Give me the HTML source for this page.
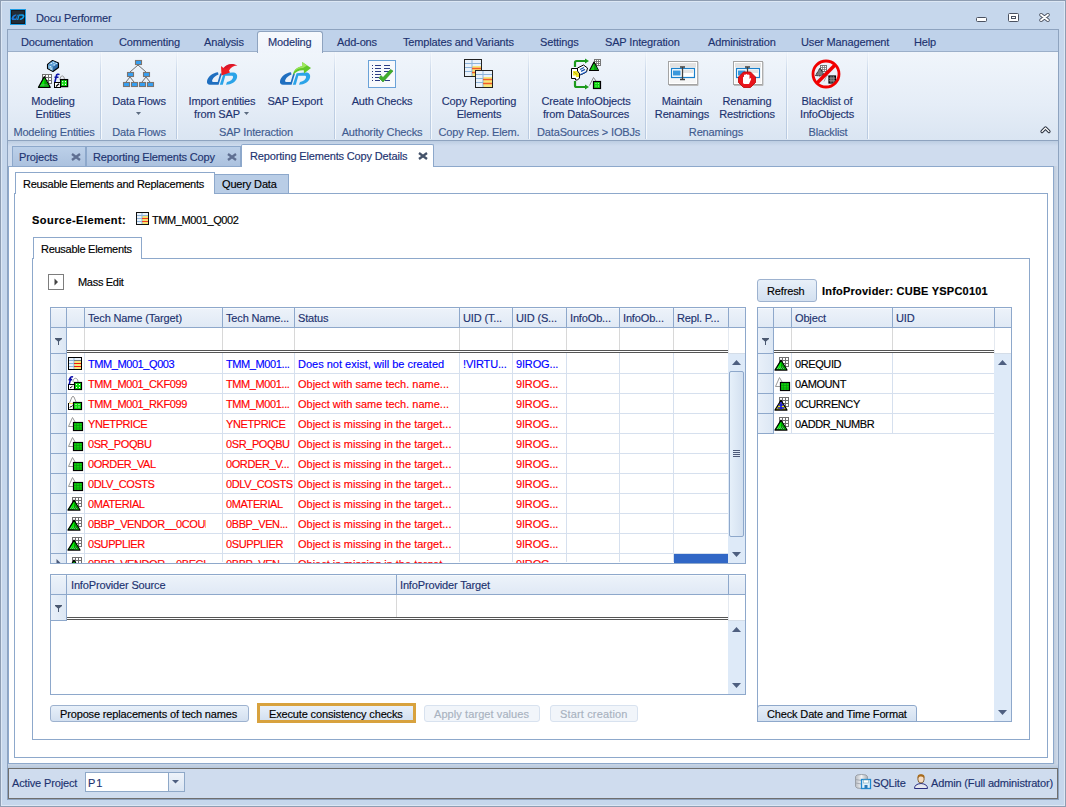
<!DOCTYPE html>
<html><head><meta charset="utf-8">
<style>
*{box-sizing:border-box;margin:0;padding:0}
html,body{width:1066px;height:807px;overflow:hidden}
body{position:relative;background:#c6d7ec;font-family:"Liberation Sans",sans-serif;font-size:11px;color:#1d3370;letter-spacing:-0.15px;-webkit-text-stroke:0.15px currentColor}
.a{position:absolute}
.t{position:absolute;white-space:nowrap;line-height:13px}
.c{text-align:center}
svg{position:absolute;overflow:visible}
.sep{position:absolute;top:52px;width:1px;height:87px;background:linear-gradient(#eef3fa,#c6d5e8 25%,#b9cae0);box-shadow:1px 0 0 #f4f8fc}
.gl{position:absolute;top:126px;white-space:nowrap;line-height:13px;color:#3f5b90;text-align:center}
.rt{position:absolute;top:36px;white-space:nowrap;line-height:13px}
.dt{position:absolute;top:146px;height:21px;background:linear-gradient(#bcd0e9,#abc1de);border:1px solid #8da8cb;border-bottom:none}
.x{position:absolute;font-weight:bold;font-size:12px;color:#6b7a90;line-height:13px}
</style></head><body>
<!-- window frame -->
<div class="a" style="left:0;top:0;width:1066px;height:807px;border:1px solid #8e9db2"></div>
<div class="a" style="left:1px;top:1px;width:1064px;height:805px;border:1px solid #dce7f4"></div>

<!-- title -->
<div class="a" style="left:10px;top:9px;width:16px;height:16px;background:#222c36;border:1px solid #1b9ae2;box-shadow:inset 0 0 0 1px #151a20"></div>
<svg style="left:8px;top:7px" width="20" height="20" viewBox="8 7 20 20"><g transform="translate(10.2,8.5) scale(0.43,0.46)">
 <path d="M14 12.3 C9 12.8,4 16.5,3 21 C2.6 23.5,4 24.8,6 24.8 L14.6 24.8 L18 13.5 L16.2 13.5 L13.7 22 L9.2 22 C8 22,7.8 21,8.4 19.8 C9.5 17.5,11.5 15.8,14.5 14.6Z" fill="#1f7ad8"/>
 <path d="M15.8 24.8 L19.6 13.2 L28 12.6 C32 12.4,33.8 14.5,33 17.8 C32 21.8,27.5 24.8,22 24.8 L23 22 C26.5 21.2,28.8 19.2,29 17.4 C29.2 16.2,28.5 15.8,27.5 15.8 L21.3 15.8 L18.8 24.8Z" fill="#12a2f0"/>
</g></svg>
<div class="t" style="left:36px;top:12px">Docu Performer</div>
<!-- window buttons -->
<div class="a" style="left:976px;top:17px;width:11px;height:5px;background:#fff;border:1px solid #4a5160;border-radius:1.5px"></div>
<div class="a" style="left:1008px;top:13px;width:11px;height:9px;background:#fff;border:1px solid #4a5160;border-radius:1.5px"></div>
<div class="a" style="left:1011px;top:16px;width:5px;height:3px;background:#fff;border:1px solid #4a5160"></div>
<svg style="left:1039px;top:13px" width="11" height="9" viewBox="0 0 11 9"><path d="M2 1.8 L9 7.2 M9 1.8 L2 7.2" stroke="#4a5160" stroke-width="3.6" stroke-linecap="round"/><path d="M2 1.8 L9 7.2 M9 1.8 L2 7.2" stroke="#fff" stroke-width="1.9" stroke-linecap="round"/></svg>

<!-- ribbon -->
<div class="a" style="left:7px;top:29px;width:1052px;height:771px;border:1px solid #8ea3bf"></div>
<div class="a" style="left:7px;top:29px;width:1052px;height:112px;border:1px solid #8ea3bf;background:#bfd2ea"></div>
<div class="a" style="left:8px;top:51px;width:1050px;height:1px;background:#9bafc9"></div>
<div class="a" style="left:8px;top:52px;width:1050px;height:88px;background:linear-gradient(#f0f5fb,#e5edf7 60%,#dae5f2)"></div>
<div class="a" style="left:257px;top:31px;width:66px;height:22px;border:1px solid #8ea3bf;border-bottom:none;border-radius:3px 3px 0 0;background:linear-gradient(#f6f9fd,#eff4fb)"></div>
<div class="rt" style="left:21px">Documentation</div>
<div class="rt" style="left:119px">Commenting</div>
<div class="rt" style="left:204px">Analysis</div>
<div class="rt" style="left:268px">Modeling</div>
<div class="rt" style="left:337px">Add-ons</div>
<div class="rt" style="left:403px">Templates and Variants</div>
<div class="rt" style="left:540px">Settings</div>
<div class="rt" style="left:605px">SAP Integration</div>
<div class="rt" style="left:708px">Administration</div>
<div class="rt" style="left:801px">User Management</div>
<div class="rt" style="left:914px">Help</div>

<div class="sep" style="left:100px"></div>
<div class="sep" style="left:176px"></div>
<div class="sep" style="left:334px"></div>
<div class="sep" style="left:430px"></div>
<div class="sep" style="left:528px"></div>
<div class="sep" style="left:645px"></div>
<div class="sep" style="left:786px"></div>
<div class="sep" style="left:867px"></div>

<div class="t c" style="left:3px;width:100px;top:95px">Modeling<br>Entities</div>
<div class="gl" style="left:4px;width:100px">Modeling Entities</div>
<div class="t c" style="left:89px;width:100px;top:95px">Data Flows</div>
<svg style="left:136px;top:112px" width="5" height="3"><path d="M0 0 H5 L2.5 3Z" fill="#5c6b80"/></svg>
<div class="gl" style="left:89px;width:100px">Data Flows</div>
<div class="t c" style="left:172px;width:100px;top:95px">Import entities</div>
<div class="t" style="left:194px;top:108px">from SAP</div>
<svg style="left:244px;top:112px" width="5" height="3"><path d="M0 0 H5 L2.5 3Z" fill="#5c6b80"/></svg>
<div class="t c" style="left:245px;width:100px;top:95px">SAP Export</div>
<div class="gl" style="left:206px;width:100px">SAP Interaction</div>
<div class="t c" style="left:332px;width:100px;top:95px">Auth Checks</div>
<div class="gl" style="left:332px;width:100px">Authority Checks</div>
<div class="t c" style="left:429px;width:100px;top:95px">Copy Reporting<br>Elements</div>
<div class="gl" style="left:429px;width:100px">Copy Rep. Elem.</div>
<div class="t c" style="left:536px;width:100px;top:95px">Create InfoObjects<br>from DataSources</div>
<div class="gl" style="left:537px;width:100px">DataSources &gt; IOBJs</div>
<div class="t c" style="left:632px;width:100px;top:95px">Maintain<br>Renamings</div>
<div class="t c" style="left:697px;width:100px;top:95px">Renaming<br>Restrictions</div>
<div class="gl" style="left:666px;width:100px">Renamings</div>
<div class="t c" style="left:777px;width:100px;top:95px">Blacklist of<br>InfoObjects</div>
<div class="gl" style="left:778px;width:100px">Blacklist</div>
<svg style="left:1040px;top:125px" width="11" height="9"><path d="M2 6.5 L5.5 3 L9 6.5" stroke="#2c3442" stroke-width="3.2" fill="none" stroke-linecap="round" stroke-linejoin="round"/><path d="M2 6.5 L5.5 3 L9 6.5" stroke="#fff" stroke-width="1.2" fill="none" stroke-linecap="round" stroke-linejoin="round"/></svg>
<!-- ribbon icons -->
<!-- modeling entities -->
<svg style="left:38px;top:60px" width="31" height="29" viewBox="0 0 31 29">
 <path d="M9.5 4.5 L14.5 0.5 L20.5 3 L20.5 7.5 L15 11.5 L9.5 8.5Z" fill="#2f6aa6" stroke="#000" stroke-width="1.1" stroke-linejoin="round"/>
 <path d="M10 4.6 L14.6 1.1 L20 3.2 L15 6.8Z" fill="#5e9fd6"/>
 <path d="M10.2 8.3 L14.8 11 V7 L10.2 4.8Z" fill="#7fb8dc"/>
 <g fill="#cfeafb"><rect x="12.5" y="2.8" width="1.6" height="1.2"/><rect x="15.5" y="4.3" width="1.6" height="1.2"/><rect x="14.8" y="1.8" width="1.6" height="1.1"/><rect x="17.6" y="3" width="1.5" height="1.1"/><rect x="11.8" y="6" width="1.4" height="1.3"/><rect x="12.5" y="8.3" width="1.4" height="1.3"/></g>
 <rect x="4.5" y="14.5" width="9" height="9" fill="#fff" stroke="#707070" stroke-width="1"/>
 <path d="M7.5 14.5 V23.5 M10.5 14.5 V23.5 M4.5 17.5 H13.5 M4.5 20.5 H13.5" stroke="#707070" stroke-width="1"/>
 <path d="M0.5 27.3 L6.3 16.8 L12.2 27.3Z" fill="#00ee00" stroke="#000" stroke-width="1.3" stroke-linejoin="round"/>
 <path d="M6.3 17.8 V26.6 H11.2Z" fill="#00a000"/>
 <path d="M2.5 25.8 H10.5 M3.5 24.5 H9.5" stroke="#8a9aa0" stroke-width="0.8" stroke-dasharray="1 1"/>
 <path d="M22 20 C22 14.5,26.5 14.5,26.5 20" stroke="#9a9a9a" stroke-width="1" fill="none"/>
 <path d="M18.2 16 C18.8 14.2,20.2 13.8,21.5 14.6 M16.5 17.3 H20.5 M18.6 15 L16.8 22.5" stroke="#0c14a8" stroke-width="1.6" fill="none"/>
 <rect x="16.5" y="22.5" width="6" height="5" fill="#fff" stroke="#000" stroke-width="1"/>
 <path d="M18 26.5 L21 23.8" stroke="#000" stroke-width="1.2"/>
 <rect x="22.6" y="19.6" width="7" height="7" fill="#11dd11" stroke="#000" stroke-width="1.3"/>
 <path d="M24.2 21.6 h1 M27 21.6 h1 M24.2 24.4 h1 M27 24.4 h1" stroke="#fff" stroke-width="1.1"/>
</svg>
<!-- data flows -->
<svg style="left:122px;top:59px" width="33" height="29" viewBox="0 0 33 29">
 <path d="M16 6 L8 13 M16 6 L24 13 M8 18 L4 23 M8 18 L12 23 M24 18 L20 23 M24 18 L28 23" stroke="#6e6e6e" stroke-width="1"/>
 <g fill="#34a0f5" stroke="#7a7470" stroke-width="1.1">
 <rect x="13.5" y="1.5" width="6" height="4"/>
 <rect x="5.5" y="13.5" width="6" height="4"/><rect x="21.5" y="13.5" width="6" height="4"/>
 <rect x="1.5" y="23.5" width="6" height="4"/><rect x="9.5" y="23.5" width="6" height="4"/><rect x="17.5" y="23.5" width="6" height="4"/><rect x="25.5" y="23.5" width="6" height="4"/>
 </g>
</svg>
<!-- import -->
<svg style="left:204px;top:60px" width="36" height="28" viewBox="0 0 36 28">
 <path d="M14 12.3 C9 12.8,4 16.5,3 21 C2.6 23.5,4 24.8,6 24.8 L14.6 24.8 L18 13.5 L16.2 13.5 L13.7 22 L9.2 22 C8 22,7.8 21,8.4 19.8 C9.5 17.5,11.5 15.8,14.5 14.6Z" fill="#1f6fc0"/>
 <path d="M15.8 24.8 L19.6 13.2 L28 12.6 C32 12.4,33.8 14.5,33 17.8 C32 21.8,27.5 24.8,22 24.8 L23 22 C26.5 21.2,28.8 19.2,29 17.4 C29.2 16.2,28.5 15.8,27.5 15.8 L21.3 15.8 L18.8 24.8Z" fill="#2aa3e8"/>
 <path d="M17.5 15.5 L17 6 L19.5 8 C23 4,28 2.5,33.5 5.5 C30 5.5,27 7,25 10.5 L26 12.5Z" fill="#ee1c24"/>
 <path d="M19.5 8 C23 4,28 2.5,33.5 5.5 C30 4.8,26 5.5,23 8.5Z" fill="#c8102e" opacity="0.6"/>
</svg>
<!-- export -->
<svg style="left:277px;top:60px" width="36" height="28" viewBox="0 0 36 28">
 <path d="M14 12.3 C9 12.8,4 16.5,3 21 C2.6 23.5,4 24.8,6 24.8 L14.6 24.8 L18 13.5 L16.2 13.5 L13.7 22 L9.2 22 C8 22,7.8 21,8.4 19.8 C9.5 17.5,11.5 15.8,14.5 14.6Z" fill="#1f6fc0"/>
 <path d="M15.8 24.8 L19.6 13.2 L28 12.6 C32 12.4,33.8 14.5,33 17.8 C32 21.8,27.5 24.8,22 24.8 L23 22 C26.5 21.2,28.8 19.2,29 17.4 C29.2 16.2,28.5 15.8,27.5 15.8 L21.3 15.8 L18.8 24.8Z" fill="#2aa3e8"/>
 <path d="M16 15 C16.5 10,20 7,25.5 6.3 L25.2 2 L34 8 L27 13.5 L26.8 10.3 C22 10,19 11.5,16 15Z" fill="#62c82a"/>
 <path d="M17 12 C18.5 9,21 7.2,25.5 6.3 L25.2 2 L30 5.5 L26 8 C22 8,19.5 9.5,17 12Z" fill="#9ee85a"/>
</svg>
<!-- auth checks -->
<svg style="left:368px;top:60px" width="28" height="28" viewBox="0 0 28 28">
 <rect x="0.5" y="0.5" width="27" height="27" fill="#f7f9fc" stroke="#6aa2d8" stroke-width="1"/>
 <g fill="#24357a"><rect x="4" y="5" width="1" height="1"/><rect x="4" y="8" width="1" height="1"/><rect x="4" y="11" width="1" height="1"/><rect x="4" y="14" width="1" height="1"/><rect x="4" y="17" width="1" height="1"/><rect x="4" y="20" width="1" height="1"/></g>
 <g stroke="#2c3d85" stroke-width="1"><path d="M7 5.5 H13 M16 5.5 H22 M7 8.5 H13 M16 8.5 H22 M7 11.5 H13 M16 11.5 H22 M7 14.5 H13 M7 17.5 H11 M7 20.5 H12 M17 20.5 H22"/></g>
 <path d="M11 18 L15 22 L25 11 L22.5 9.5 L15 17.5 L13 15.5Z" fill="#3fae2a" stroke="#2a8a1c" stroke-width="0.6"/>
</svg>
<!-- copy reporting elements -->
<svg style="left:464px;top:59px" width="29" height="29" viewBox="0 0 29 29">
 <rect x="0.5" y="0.5" width="17" height="17" fill="#eaf2fa" stroke="#222" stroke-width="1"/>
 <rect x="8" y="7" width="9" height="10" fill="#f8e678"/>
 <path d="M8 1 V17 M1 4.5 H17 M1 8.5 H8 M1 12.5 H8" stroke="#8db3da" stroke-width="1"/>
 <path d="M8 9.5 H17 M8 13.5 H17" stroke="#f05a28" stroke-width="1.3"/>
 <rect x="11.5" y="11.5" width="17" height="17" fill="#eaf2fa" stroke="#222" stroke-width="1"/>
 <rect x="19" y="18" width="9" height="10" fill="#f8e678"/>
 <path d="M19 12 V28 M12 15.5 H28 M12 19.5 H19 M12 23.5 H19" stroke="#8db3da" stroke-width="1"/>
 <path d="M19 20.5 H28 M19 24.5 H28" stroke="#f05a28" stroke-width="1.3"/>
</svg>
<!-- create infoobjects -->
<svg style="left:571px;top:59px" width="31" height="30" viewBox="0 0 31 30">
 <path d="M4 8 V3.5 Q4 2,5.5 2 H15" stroke="#1c9a1c" stroke-width="2.2" fill="none"/>
 <path d="M14 -0.5 L18 2 L14 4.5Z" fill="#1c9a1c"/>
 <path d="M4 22 V26.5 Q4 28,5.5 28 H15" stroke="#1c9a1c" stroke-width="2.2" fill="none"/>
 <path d="M14 25.5 L18 28 L14 30.5Z" fill="#1c9a1c"/>
 <path d="M0.5 9.5 H6 L8.5 13 L8.5 19 L6.5 21 H4.5 L4.5 19.5 L0.5 19.5Z" fill="#fff" stroke="#000" stroke-width="1"/>
 <path d="M2 12 H6 L8 15 V18 H5 V16.5 H2Z" fill="#f2e62a"/>
 <path d="M3 13 L6 15.5" stroke="#9a8a10" stroke-width="0.8"/>
 <path d="M6.5 9 L12.5 6 L16.5 9 L15.5 13 L9.5 16 L6.5 12Z" fill="#fff" stroke="#000" stroke-width="1"/>
 <path d="M9 10.5 L13 8.5 M10 12.3 L14 10.3" stroke="#1a55b0" stroke-width="1.3"/>
 <path d="M9.5 15.5 L15.5 12.5" stroke="#2a6ad0" stroke-width="1.2"/>
 <rect x="23.5" y="0.5" width="6" height="6" fill="#fff" stroke="#777" stroke-width="1"/>
 <path d="M25.5 0.5 V6.5 M27.5 0.5 V6.5 M23.5 2.5 H29.5 M23.5 4.5 H29.5" stroke="#777" stroke-width="0.9"/>
 <path d="M18.5 11.5 L23 3 L27.5 11.5Z" fill="#14d014" stroke="#000" stroke-width="1.1" stroke-linejoin="round"/>
 <path d="M23 4 V11 H27Z" fill="#0a9a1a"/>
 <path d="M18.5 26.5 L22.5 18.5 L25 22" stroke="#8a8a8a" stroke-width="1" fill="none"/>
 <rect x="22.5" y="22.5" width="7" height="7" fill="#11d611" stroke="#000" stroke-width="1.2"/>
 <path d="M24.5 24.5 h1 M27 24.5 h1 M24.5 27 h1 M27 27 h1" stroke="#9f9" stroke-width="1"/>
</svg>
<!-- maintain renamings -->
<svg style="left:668px;top:61px" width="31" height="25" viewBox="0 0 31 25">
 <rect x="0.5" y="0.5" width="29" height="23" fill="#fff" stroke="#a4a4a4" stroke-width="1"/>
 <rect x="2" y="2" width="26" height="4.5" fill="#e2e2e2"/>
 <rect x="2" y="17" width="26" height="5" fill="#f6f6f6"/>
 <rect x="3.5" y="7.5" width="23" height="9" fill="#fff" stroke="#1a80cc" stroke-width="1.2"/>
 <rect x="14" y="9" width="11" height="3" fill="#e4e4e4"/>
 <rect x="5" y="9.5" width="7.5" height="5" fill="#3a98dc"/>
 <path d="M12 6 H17 M14.5 6 V18.5 M12 18.5 H17" stroke="#404040" stroke-width="1.3"/>
 <path d="M1 24.5 H30 V1" stroke="#bbb" stroke-width="1" fill="none"/>
</svg>
<!-- renaming restrictions -->
<svg style="left:733px;top:61px" width="31" height="27" viewBox="0 0 31 27">
 <rect x="0.5" y="0.5" width="29" height="23" fill="#fff" stroke="#a4a4a4" stroke-width="1"/>
 <rect x="2" y="2" width="26" height="4.5" fill="#e2e2e2"/>
 <rect x="2" y="17" width="26" height="5" fill="#f6f6f6"/>
 <rect x="3.5" y="7.5" width="23" height="9" fill="#fff" stroke="#1a80cc" stroke-width="1.2"/>
 <rect x="14" y="9" width="11" height="3" fill="#e4e4e4"/>
 <rect x="5" y="9.5" width="7.5" height="5" fill="#3a98dc"/>
 <path d="M12 6 H17 M14.5 6 V11" stroke="#404040" stroke-width="1.3"/>
 <path d="M1 24.5 H30 V1" stroke="#bbb" stroke-width="1" fill="none"/>
 <path d="M10.5 11 L17.5 11 L22.5 16 L22.5 21.5 L17.5 26.5 L10.5 26.5 L5.5 21.5 L5.5 16Z" fill="#e8141c" stroke="#b00" stroke-width="0.8"/>
 <path d="M10 22 L10 16.5 Q10 15.5,11 16 L11 14 Q12 13,12.5 14 L12.5 13.5 Q13.5 12.5,14.5 13.5 L14.5 14 Q15.5 13,16.5 14 L16.5 18 L17.5 17 Q18.5 17,18 18.5 L16 23 L11 23Z" fill="#fff"/>
</svg>
<!-- blacklist -->
<svg style="left:811px;top:59px" width="30" height="30" viewBox="0 0 30 30">
 <rect x="9.5" y="6.5" width="6" height="6" fill="#fff" stroke="#777" stroke-width="1"/>
 <path d="M11.5 6.5 V12.5 M13.5 6.5 V12.5 M9.5 8.5 H15.5 M9.5 10.5 H15.5" stroke="#777" stroke-width="0.8"/>
 <path d="M4.5 16.5 L9 9 L13 15.5 L9 17Z" fill="#7a7a7a" stroke="#111" stroke-width="1" stroke-dasharray="1 0.6"/>
 <path d="M13 22.5 L16 16 L19 19" stroke="#aaa" stroke-width="1" fill="none"/>
 <rect x="18" y="17" width="6.5" height="7" fill="#555" stroke="#000" stroke-width="1.2"/>
 <path d="M20 17 V24 M22.3 17 V24 M18 19.3 H24.5 M18 21.6 H24.5" stroke="#999" stroke-width="0.6"/>
 <circle cx="15" cy="15" r="13" fill="none" stroke="#f10000" stroke-width="2.8"/>
 <path d="M24.5 5.5 L5.5 24.5" stroke="#f10000" stroke-width="3.6"/>
</svg>
<!-- doc tab strip -->
<div class="a" style="left:8px;top:141px;width:1050px;height:26px;background:linear-gradient(#bccde2,#cfdcee 5px,#cfdcee)"></div>
<div class="dt" style="left:12px;width:74px"></div>
<div class="t" style="left:19px;top:151px">Projects</div>
<svg style="left:71px;top:153px" width="10" height="8"><path d="M1 1 L9 7 M9 1 L1 7" stroke="#5f6f92" stroke-width="2.3"/></svg>
<div class="dt" style="left:86px;width:155px"></div>
<div class="t" style="left:93px;top:151px">Reporting Elements Copy</div>
<svg style="left:227px;top:153px" width="10" height="8"><path d="M1 1 L9 7 M9 1 L1 7" stroke="#5f6f92" stroke-width="2.3"/></svg>
<!-- content -->
<div class="a" style="left:8px;top:166px;width:1046px;height:598px;background:#fff;border:1px solid #8da8cb"></div>
<div class="a" style="left:1054px;top:166px;width:4px;height:602px;background:linear-gradient(90deg,#bfcbdb,#d0dcec)"></div>
<div class="a" style="left:241px;top:144px;width:193px;height:23px;background:#fff;border:1px solid #8da8cb;border-bottom:none;border-radius:2px 2px 0 0"></div>
<div class="t" style="left:250px;top:150px">Reporting Elements Copy Details</div>
<svg style="left:418px;top:152px" width="10" height="8"><path d="M1 1 L9 7 M9 1 L1 7" stroke="#45536a" stroke-width="2.3"/></svg>
<div class="a" style="left:8px;top:764px;width:1050px;height:4px;background:linear-gradient(#c8d5e6,#b8c8dc)"></div>

<!-- outer tab control -->
<div class="a" style="left:14px;top:193px;width:1034px;height:565px;border:1px solid #8da8cb"></div>
<div class="a" style="left:214px;top:174px;width:75px;height:20px;background:#b9cde6;border:1px solid #8da8cb"></div>
<div class="t" style="left:222px;top:178px;color:#000">Query Data</div>
<div class="a" style="left:15px;top:172px;width:200px;height:22px;background:#fff;border:1px solid #8da8cb;border-bottom:none"></div>
<div class="t" style="left:23px;top:178px;color:#000;letter-spacing:-0.27px">Reusable Elements and Replacements</div>

<!-- source element -->
<div class="t" style="left:32px;top:214px;color:#000;font-weight:bold;letter-spacing:0.45px">Source-Element:</div>
<svg style="left:136px;top:212px" width="13" height="13" viewBox="0 0 13 13">
 <rect x="0.5" y="0.5" width="12" height="12" fill="#eaf2fa" stroke="#111" stroke-width="1"/>
 <rect x="6" y="4" width="6" height="8" fill="#f6e270"/>
 <path d="M6 1 V12 M1 3.5 H12 M1 6.5 H6 M1 9.5 H6" stroke="#8db3da" stroke-width="1"/>
 <path d="M6 6.5 H12 M6 9.5 H12" stroke="#f03a20" stroke-width="1.2"/>
</svg>
<div class="t" style="left:152px;top:214px;color:#000;letter-spacing:-0.4px">TMM_M001_Q002</div>

<!-- inner tab control -->
<div class="a" style="left:32px;top:258px;width:998px;height:482px;border:1px solid #8da8cb"></div>
<div class="a" style="left:33px;top:237px;width:109px;height:22px;background:#fff;border:1px solid #8da8cb;border-bottom:none"></div>
<div class="t" style="left:41px;top:243px;color:#000;letter-spacing:-0.27px">Reusable Elements</div>

<!-- mass edit -->
<div class="a" style="left:48px;top:274px;width:16px;height:16px;border:1px solid #7d7d7d;background:#fff"></div>
<svg style="left:54px;top:278px" width="5" height="8"><path d="M0.5 0.5 L4 4 L0.5 7.5Z" fill="#444"/></svg>
<div class="t" style="left:78px;top:276px;color:#000;letter-spacing:-0.3px">Mass Edit</div>
<div class="a" style="left:50px;top:307px;width:696px;height:257px;border:1px solid #8ea8cb;background:#fff;overflow:hidden">
</div>
<div class="a" style="left:51px;top:308px;width:694px;height:19px;background:linear-gradient(#edf3fa,#e0e9f5);box-shadow:inset 0 1px 0 #f7fafd"></div>
<div class="a" style="left:51px;top:327px;width:694px;height:1px;background:#8ea8cb"></div>
<div class="a" style="left:51px;top:328px;width:15px;height:25px;background:linear-gradient(90deg,#e9f0f9,#dce7f4)"></div>
<div class="a" style="left:51px;top:353px;width:15px;height:1px;background:#8ea8cb"></div>
<svg style="left:55px;top:338px" width="7" height="7" viewBox="0 0 7 7"><path d="M0 0 H7 V1 L4 3.5 V7 H3 V3.5 L0 1Z" fill="#4a5870"/></svg>
<div class="a" style="left:51px;top:354px;width:15px;height:19px;background:linear-gradient(90deg,#e9f0f9,#dce7f4)"></div>
<div class="a" style="left:51px;top:373px;width:15px;height:1px;background:#8ea8cb"></div>
<div class="a" style="left:51px;top:374px;width:15px;height:19px;background:linear-gradient(90deg,#e9f0f9,#dce7f4)"></div>
<div class="a" style="left:51px;top:393px;width:15px;height:1px;background:#8ea8cb"></div>
<div class="a" style="left:51px;top:394px;width:15px;height:19px;background:linear-gradient(90deg,#e9f0f9,#dce7f4)"></div>
<div class="a" style="left:51px;top:413px;width:15px;height:1px;background:#8ea8cb"></div>
<div class="a" style="left:51px;top:414px;width:15px;height:19px;background:linear-gradient(90deg,#e9f0f9,#dce7f4)"></div>
<div class="a" style="left:51px;top:433px;width:15px;height:1px;background:#8ea8cb"></div>
<div class="a" style="left:51px;top:434px;width:15px;height:19px;background:linear-gradient(90deg,#e9f0f9,#dce7f4)"></div>
<div class="a" style="left:51px;top:453px;width:15px;height:1px;background:#8ea8cb"></div>
<div class="a" style="left:51px;top:454px;width:15px;height:19px;background:linear-gradient(90deg,#e9f0f9,#dce7f4)"></div>
<div class="a" style="left:51px;top:473px;width:15px;height:1px;background:#8ea8cb"></div>
<div class="a" style="left:51px;top:474px;width:15px;height:19px;background:linear-gradient(90deg,#e9f0f9,#dce7f4)"></div>
<div class="a" style="left:51px;top:493px;width:15px;height:1px;background:#8ea8cb"></div>
<div class="a" style="left:51px;top:494px;width:15px;height:19px;background:linear-gradient(90deg,#e9f0f9,#dce7f4)"></div>
<div class="a" style="left:51px;top:513px;width:15px;height:1px;background:#8ea8cb"></div>
<div class="a" style="left:51px;top:514px;width:15px;height:19px;background:linear-gradient(90deg,#e9f0f9,#dce7f4)"></div>
<div class="a" style="left:51px;top:533px;width:15px;height:1px;background:#8ea8cb"></div>
<div class="a" style="left:51px;top:534px;width:15px;height:19px;background:linear-gradient(90deg,#e9f0f9,#dce7f4)"></div>
<div class="a" style="left:51px;top:553px;width:15px;height:1px;background:#8ea8cb"></div>
<div class="a" style="left:51px;top:554px;width:15px;height:9px;background:linear-gradient(90deg,#e9f0f9,#dce7f4)"></div>
<div class="a" style="left:66px;top:308px;width:1px;height:255px;background:#8ea8cb"></div>
<div class="a" style="left:84px;top:308px;width:1px;height:19px;background:#8ea8cb"></div>
<div class="a" style="left:222px;top:308px;width:1px;height:19px;background:#8ea8cb"></div>
<div class="a" style="left:294px;top:308px;width:1px;height:19px;background:#8ea8cb"></div>
<div class="a" style="left:459px;top:308px;width:1px;height:19px;background:#8ea8cb"></div>
<div class="a" style="left:512px;top:308px;width:1px;height:19px;background:#8ea8cb"></div>
<div class="a" style="left:566px;top:308px;width:1px;height:19px;background:#8ea8cb"></div>
<div class="a" style="left:619px;top:308px;width:1px;height:19px;background:#8ea8cb"></div>
<div class="a" style="left:673px;top:308px;width:1px;height:19px;background:#8ea8cb"></div>
<div class="a" style="left:728px;top:308px;width:1px;height:19px;background:#8ea8cb"></div>
<div class="a" style="left:84px;top:328px;width:1px;height:22px;background:#d8d8d8"></div>
<div class="a" style="left:222px;top:328px;width:1px;height:22px;background:#d8d8d8"></div>
<div class="a" style="left:294px;top:328px;width:1px;height:22px;background:#d8d8d8"></div>
<div class="a" style="left:459px;top:328px;width:1px;height:22px;background:#d8d8d8"></div>
<div class="a" style="left:512px;top:328px;width:1px;height:22px;background:#d8d8d8"></div>
<div class="a" style="left:566px;top:328px;width:1px;height:22px;background:#d8d8d8"></div>
<div class="a" style="left:619px;top:328px;width:1px;height:22px;background:#d8d8d8"></div>
<div class="a" style="left:673px;top:328px;width:1px;height:22px;background:#d8d8d8"></div>
<div class="a" style="left:728px;top:328px;width:1px;height:25px;background:#e4e9f0"></div>
<div class="a" style="left:67px;top:350px;width:661px;height:1px;background:#555"></div>
<div class="a" style="left:67px;top:352px;width:661px;height:1px;background:#555"></div>
<div class="a" style="left:67px;top:373px;width:661px;height:1px;background:#d6e0ee"></div>
<div class="a" style="left:67px;top:393px;width:661px;height:1px;background:#d6e0ee"></div>
<div class="a" style="left:67px;top:413px;width:661px;height:1px;background:#d6e0ee"></div>
<div class="a" style="left:67px;top:433px;width:661px;height:1px;background:#d6e0ee"></div>
<div class="a" style="left:67px;top:453px;width:661px;height:1px;background:#d6e0ee"></div>
<div class="a" style="left:67px;top:473px;width:661px;height:1px;background:#d6e0ee"></div>
<div class="a" style="left:67px;top:493px;width:661px;height:1px;background:#d6e0ee"></div>
<div class="a" style="left:67px;top:513px;width:661px;height:1px;background:#d6e0ee"></div>
<div class="a" style="left:67px;top:533px;width:661px;height:1px;background:#d6e0ee"></div>
<div class="a" style="left:67px;top:553px;width:661px;height:1px;background:#d6e0ee"></div>
<div class="a" style="left:84px;top:353px;width:1px;height:209px;background:#d6e0ee"></div>
<div class="a" style="left:222px;top:353px;width:1px;height:209px;background:#d6e0ee"></div>
<div class="a" style="left:294px;top:353px;width:1px;height:209px;background:#d6e0ee"></div>
<div class="a" style="left:459px;top:353px;width:1px;height:209px;background:#d6e0ee"></div>
<div class="a" style="left:512px;top:353px;width:1px;height:209px;background:#d6e0ee"></div>
<div class="a" style="left:566px;top:353px;width:1px;height:209px;background:#d6e0ee"></div>
<div class="a" style="left:619px;top:353px;width:1px;height:209px;background:#d6e0ee"></div>
<div class="a" style="left:673px;top:353px;width:1px;height:209px;background:#d6e0ee"></div>
<div class="a" style="left:674px;top:554px;width:54px;height:9px;background:#3167c6"></div><svg style="left:56px;top:559px" width="5" height="4"><path d="M0.5 0 L4.5 4 H0.5Z" fill="#4a5878"/></svg>
<div class="a" style="left:67px;top:354px;width:17px;height:19px;overflow:hidden"><svg style="left:0px;top:1px" width="16" height="16" viewBox="0 0 16 16">
 <rect x="1.5" y="2.5" width="13" height="12" fill="#eaf2fa" stroke="#000" stroke-width="1"/>
 <rect x="7" y="6" width="7" height="8" fill="#f6e878"/>
 <path d="M7 3 V14 M2 5.5 H14 M2 8.5 H7 M2 11.5 H7" stroke="#8db3da" stroke-width="1"/>
 <path d="M7 5.5 H14" stroke="#777" stroke-width="1"/>
 <path d="M7 8.5 H14 M7 11.5 H14" stroke="#f01010" stroke-width="1.2"/></svg></div>
<div class="a" style="left:85px;top:354px;width:136px;height:19px;overflow:hidden"><div class="t" style="left:3px;top:4px;color:#0000ff;letter-spacing:-0.42px">TMM_M001_Q003</div></div>
<div class="a" style="left:223px;top:354px;width:70px;height:19px;overflow:hidden"><div class="t" style="left:3px;top:4px;color:#0000ff;letter-spacing:-0.4px">TMM_M001...</div></div>
<div class="a" style="left:295px;top:354px;width:163px;height:19px;overflow:hidden"><div class="t" style="left:3px;top:4px;color:#0000ff;letter-spacing:0px">Does not exist, will be created</div></div>
<div class="a" style="left:460px;top:354px;width:51px;height:19px;overflow:hidden"><div class="t" style="left:3px;top:4px;color:#0000ff;letter-spacing:-0.15px">!VIRTU...</div></div>
<div class="a" style="left:513px;top:354px;width:52px;height:19px;overflow:hidden"><div class="t" style="left:3px;top:4px;color:#0000ff;letter-spacing:-0.15px">9IROG...</div></div>
<div class="a" style="left:67px;top:374px;width:17px;height:19px;overflow:hidden"><svg style="left:0px;top:1px" width="16" height="16" viewBox="0 0 16 16">
 <path d="M6 7 C6 2,11 2,11 7" stroke="#999" stroke-width="1" fill="none"/>
 <rect x="1.5" y="9.5" width="6" height="5" fill="#fff" stroke="#000" stroke-width="1"/>
 <path d="M3 13 L5.5 11.2" stroke="#000" stroke-width="1"/>
 <path d="M2.5 4.5 C3 2,4.5 1.2,6 2 M1.5 4.8 H5.2 M3.8 3 L2.2 9.5" stroke="#0a0aa8" stroke-width="1.5" fill="none"/>
 <rect x="7.5" y="7.5" width="7" height="7" fill="#10e010" stroke="#000" stroke-width="1.2"/>
 <path d="M9 9.5 h1 M12 9.5 h1 M9 12.5 h1 M12 12.5 h1" stroke="#fff" stroke-width="1"/></svg></div>
<div class="a" style="left:85px;top:374px;width:136px;height:19px;overflow:hidden"><div class="t" style="left:3px;top:4px;color:#ff0000;letter-spacing:-0.42px">TMM_M001_CKF099</div></div>
<div class="a" style="left:223px;top:374px;width:70px;height:19px;overflow:hidden"><div class="t" style="left:3px;top:4px;color:#ff0000;letter-spacing:-0.4px">TMM_M001...</div></div>
<div class="a" style="left:295px;top:374px;width:163px;height:19px;overflow:hidden"><div class="t" style="left:3px;top:4px;color:#ff0000;letter-spacing:0px">Object with same tech. name...</div></div>
<div class="a" style="left:513px;top:374px;width:52px;height:19px;overflow:hidden"><div class="t" style="left:3px;top:4px;color:#ff0000;letter-spacing:-0.15px">9IROG...</div></div>
<div class="a" style="left:67px;top:394px;width:17px;height:19px;overflow:hidden"><svg style="left:0px;top:1px" width="16" height="16" viewBox="0 0 16 16">
 <path d="M2.5 8 L5 2 Q6 0.5,7 2 L9.5 8" stroke="#999" stroke-width="1" fill="none"/>
 <rect x="1.5" y="8.5" width="5" height="6" fill="#fff" stroke="#000" stroke-width="1"/>
 <path d="M3 12.5 C3.8 10.5,4.5 12.5,5.5 10.5" stroke="#000" stroke-width="1" fill="none"/>
 <path d="M2 8.5 H6" stroke="#ffe060" stroke-width="1"/>
 <rect x="6.5" y="7.5" width="8" height="7" fill="#10dd10" stroke="#000" stroke-width="1.2"/>
 <path d="M8.5 9.5 h1 M11.5 9.5 h1 M8.5 12 h1 M11.5 12 h1" stroke="#fff" stroke-width="1"/></svg></div>
<div class="a" style="left:85px;top:394px;width:136px;height:19px;overflow:hidden"><div class="t" style="left:3px;top:4px;color:#ff0000;letter-spacing:-0.42px">TMM_M001_RKF099</div></div>
<div class="a" style="left:223px;top:394px;width:70px;height:19px;overflow:hidden"><div class="t" style="left:3px;top:4px;color:#ff0000;letter-spacing:-0.4px">TMM_M001...</div></div>
<div class="a" style="left:295px;top:394px;width:163px;height:19px;overflow:hidden"><div class="t" style="left:3px;top:4px;color:#ff0000;letter-spacing:0px">Object with same tech. name...</div></div>
<div class="a" style="left:513px;top:394px;width:52px;height:19px;overflow:hidden"><div class="t" style="left:3px;top:4px;color:#ff0000;letter-spacing:-0.15px">9IROG...</div></div>
<div class="a" style="left:67px;top:414px;width:17px;height:19px;overflow:hidden"><svg style="left:0px;top:1px" width="16" height="16" viewBox="0 0 16 16">
 <path d="M1.5 11.5 L5.5 2.5 L9.5 9.5 L6.5 11.5Z" fill="#fff" stroke="#9a9a9a" stroke-width="1"/>
 <rect x="6.5" y="7.5" width="9" height="8" fill="#0fd00f" stroke="#000" stroke-width="1.2"/>
 <path d="M9.5 8 V15 M12.5 8 V15 M7 10.5 H15 M7 13 H15" stroke="#0a9a0a" stroke-width="0.7"/></svg></div>
<div class="a" style="left:85px;top:414px;width:136px;height:19px;overflow:hidden"><div class="t" style="left:3px;top:4px;color:#ff0000;letter-spacing:-0.42px">YNETPRICE</div></div>
<div class="a" style="left:223px;top:414px;width:70px;height:19px;overflow:hidden"><div class="t" style="left:3px;top:4px;color:#ff0000;letter-spacing:-0.4px">YNETPRICE</div></div>
<div class="a" style="left:295px;top:414px;width:163px;height:19px;overflow:hidden"><div class="t" style="left:3px;top:4px;color:#ff0000;letter-spacing:0px">Object is missing in the target...</div></div>
<div class="a" style="left:513px;top:414px;width:52px;height:19px;overflow:hidden"><div class="t" style="left:3px;top:4px;color:#ff0000;letter-spacing:-0.15px">9IROG...</div></div>
<div class="a" style="left:67px;top:434px;width:17px;height:19px;overflow:hidden"><svg style="left:0px;top:1px" width="16" height="16" viewBox="0 0 16 16">
 <path d="M1.5 11.5 L5.5 2.5 L9.5 9.5 L6.5 11.5Z" fill="#fff" stroke="#9a9a9a" stroke-width="1"/>
 <rect x="6.5" y="7.5" width="9" height="8" fill="#0fd00f" stroke="#000" stroke-width="1.2"/>
 <path d="M9.5 8 V15 M12.5 8 V15 M7 10.5 H15 M7 13 H15" stroke="#0a9a0a" stroke-width="0.7"/></svg></div>
<div class="a" style="left:85px;top:434px;width:136px;height:19px;overflow:hidden"><div class="t" style="left:3px;top:4px;color:#ff0000;letter-spacing:-0.42px">0SR_POQBU</div></div>
<div class="a" style="left:223px;top:434px;width:70px;height:19px;overflow:hidden"><div class="t" style="left:3px;top:4px;color:#ff0000;letter-spacing:-0.4px">0SR_POQBU</div></div>
<div class="a" style="left:295px;top:434px;width:163px;height:19px;overflow:hidden"><div class="t" style="left:3px;top:4px;color:#ff0000;letter-spacing:0px">Object is missing in the target...</div></div>
<div class="a" style="left:513px;top:434px;width:52px;height:19px;overflow:hidden"><div class="t" style="left:3px;top:4px;color:#ff0000;letter-spacing:-0.15px">9IROG...</div></div>
<div class="a" style="left:67px;top:454px;width:17px;height:19px;overflow:hidden"><svg style="left:0px;top:1px" width="16" height="16" viewBox="0 0 16 16">
 <path d="M1.5 11.5 L5.5 2.5 L9.5 9.5 L6.5 11.5Z" fill="#fff" stroke="#9a9a9a" stroke-width="1"/>
 <rect x="6.5" y="7.5" width="9" height="8" fill="#0fd00f" stroke="#000" stroke-width="1.2"/>
 <path d="M9.5 8 V15 M12.5 8 V15 M7 10.5 H15 M7 13 H15" stroke="#0a9a0a" stroke-width="0.7"/></svg></div>
<div class="a" style="left:85px;top:454px;width:136px;height:19px;overflow:hidden"><div class="t" style="left:3px;top:4px;color:#ff0000;letter-spacing:-0.42px">0ORDER_VAL</div></div>
<div class="a" style="left:223px;top:454px;width:70px;height:19px;overflow:hidden"><div class="t" style="left:3px;top:4px;color:#ff0000;letter-spacing:-0.4px">0ORDER_V...</div></div>
<div class="a" style="left:295px;top:454px;width:163px;height:19px;overflow:hidden"><div class="t" style="left:3px;top:4px;color:#ff0000;letter-spacing:0px">Object is missing in the target...</div></div>
<div class="a" style="left:513px;top:454px;width:52px;height:19px;overflow:hidden"><div class="t" style="left:3px;top:4px;color:#ff0000;letter-spacing:-0.15px">9IROG...</div></div>
<div class="a" style="left:67px;top:474px;width:17px;height:19px;overflow:hidden"><svg style="left:0px;top:1px" width="16" height="16" viewBox="0 0 16 16">
 <path d="M1.5 11.5 L5.5 2.5 L9.5 9.5 L6.5 11.5Z" fill="#fff" stroke="#9a9a9a" stroke-width="1"/>
 <rect x="6.5" y="7.5" width="9" height="8" fill="#0fd00f" stroke="#000" stroke-width="1.2"/>
 <path d="M9.5 8 V15 M12.5 8 V15 M7 10.5 H15 M7 13 H15" stroke="#0a9a0a" stroke-width="0.7"/></svg></div>
<div class="a" style="left:85px;top:474px;width:136px;height:19px;overflow:hidden"><div class="t" style="left:3px;top:4px;color:#ff0000;letter-spacing:-0.42px">0DLV_COSTS</div></div>
<div class="a" style="left:223px;top:474px;width:70px;height:19px;overflow:hidden"><div class="t" style="left:3px;top:4px;color:#ff0000;letter-spacing:-0.4px">0DLV_COSTS</div></div>
<div class="a" style="left:295px;top:474px;width:163px;height:19px;overflow:hidden"><div class="t" style="left:3px;top:4px;color:#ff0000;letter-spacing:0px">Object is missing in the target...</div></div>
<div class="a" style="left:513px;top:474px;width:52px;height:19px;overflow:hidden"><div class="t" style="left:3px;top:4px;color:#ff0000;letter-spacing:-0.15px">9IROG...</div></div>
<div class="a" style="left:67px;top:494px;width:17px;height:19px;overflow:hidden"><svg style="left:0px;top:1px" width="16" height="16" viewBox="0 0 16 16">
 <rect x="5.5" y="2.5" width="9" height="9" fill="#fff" stroke="#707070" stroke-width="1"/>
 <path d="M8.5 2.5 V11.5 M11.5 2.5 V11.5 M5.5 5.5 H14.5 M5.5 8.5 H14.5" stroke="#707070" stroke-width="1"/>
 <path d="M1 15 L7 5.3 L13 15Z" fill="#00f000" stroke="#000" stroke-width="1.3" stroke-linejoin="round"/>
 <path d="M7 6.3 V14.4 H12.1Z" fill="#00a000"/>
 <path d="M3 13.5 H11 M4 12.2 H10" stroke="#8a9aa0" stroke-width="0.8" stroke-dasharray="1 1"/></svg></div>
<div class="a" style="left:85px;top:494px;width:136px;height:19px;overflow:hidden"><div class="t" style="left:3px;top:4px;color:#ff0000;letter-spacing:-0.42px">0MATERIAL</div></div>
<div class="a" style="left:223px;top:494px;width:70px;height:19px;overflow:hidden"><div class="t" style="left:3px;top:4px;color:#ff0000;letter-spacing:-0.4px">0MATERIAL</div></div>
<div class="a" style="left:295px;top:494px;width:163px;height:19px;overflow:hidden"><div class="t" style="left:3px;top:4px;color:#ff0000;letter-spacing:0px">Object is missing in the target...</div></div>
<div class="a" style="left:513px;top:494px;width:52px;height:19px;overflow:hidden"><div class="t" style="left:3px;top:4px;color:#ff0000;letter-spacing:-0.15px">9IROG...</div></div>
<div class="a" style="left:67px;top:514px;width:17px;height:19px;overflow:hidden"><svg style="left:0px;top:1px" width="16" height="16" viewBox="0 0 16 16">
 <rect x="5.5" y="2.5" width="9" height="9" fill="#fff" stroke="#707070" stroke-width="1"/>
 <path d="M8.5 2.5 V11.5 M11.5 2.5 V11.5 M5.5 5.5 H14.5 M5.5 8.5 H14.5" stroke="#707070" stroke-width="1"/>
 <path d="M1 15 L7 5.3 L13 15Z" fill="#00f000" stroke="#000" stroke-width="1.3" stroke-linejoin="round"/>
 <path d="M7 6.3 V14.4 H12.1Z" fill="#00a000"/>
 <path d="M3 13.5 H11 M4 12.2 H10" stroke="#8a9aa0" stroke-width="0.8" stroke-dasharray="1 1"/></svg></div>
<div class="a" style="left:85px;top:514px;width:121px;height:19px;overflow:hidden"><div class="t" style="left:3px;top:4px;color:#ff0000;letter-spacing:-0.42px">0BBP_VENDOR__0COUNTRY</div></div>
<div class="a" style="left:223px;top:514px;width:70px;height:19px;overflow:hidden"><div class="t" style="left:3px;top:4px;color:#ff0000;letter-spacing:-0.4px">0BBP_VEN...</div></div>
<div class="a" style="left:295px;top:514px;width:163px;height:19px;overflow:hidden"><div class="t" style="left:3px;top:4px;color:#ff0000;letter-spacing:0px">Object is missing in the target...</div></div>
<div class="a" style="left:513px;top:514px;width:52px;height:19px;overflow:hidden"><div class="t" style="left:3px;top:4px;color:#ff0000;letter-spacing:-0.15px">9IROG...</div></div>
<div class="a" style="left:67px;top:534px;width:17px;height:19px;overflow:hidden"><svg style="left:0px;top:1px" width="16" height="16" viewBox="0 0 16 16">
 <rect x="5.5" y="2.5" width="9" height="9" fill="#fff" stroke="#707070" stroke-width="1"/>
 <path d="M8.5 2.5 V11.5 M11.5 2.5 V11.5 M5.5 5.5 H14.5 M5.5 8.5 H14.5" stroke="#707070" stroke-width="1"/>
 <path d="M1 15 L7 5.3 L13 15Z" fill="#00f000" stroke="#000" stroke-width="1.3" stroke-linejoin="round"/>
 <path d="M7 6.3 V14.4 H12.1Z" fill="#00a000"/>
 <path d="M3 13.5 H11 M4 12.2 H10" stroke="#8a9aa0" stroke-width="0.8" stroke-dasharray="1 1"/></svg></div>
<div class="a" style="left:85px;top:534px;width:136px;height:19px;overflow:hidden"><div class="t" style="left:3px;top:4px;color:#ff0000;letter-spacing:-0.42px">0SUPPLIER</div></div>
<div class="a" style="left:223px;top:534px;width:70px;height:19px;overflow:hidden"><div class="t" style="left:3px;top:4px;color:#ff0000;letter-spacing:-0.4px">0SUPPLIER</div></div>
<div class="a" style="left:295px;top:534px;width:163px;height:19px;overflow:hidden"><div class="t" style="left:3px;top:4px;color:#ff0000;letter-spacing:0px">Object is missing in the target...</div></div>
<div class="a" style="left:513px;top:534px;width:52px;height:19px;overflow:hidden"><div class="t" style="left:3px;top:4px;color:#ff0000;letter-spacing:-0.15px">9IROG...</div></div>
<div class="a" style="left:67px;top:554px;width:17px;height:9px;overflow:hidden"><svg style="left:0px;top:1px" width="16" height="16" viewBox="0 0 16 16">
 <rect x="5.5" y="2.5" width="9" height="9" fill="#fff" stroke="#707070" stroke-width="1"/>
 <path d="M8.5 2.5 V11.5 M11.5 2.5 V11.5 M5.5 5.5 H14.5 M5.5 8.5 H14.5" stroke="#707070" stroke-width="1"/>
 <path d="M1 15 L7 5.3 L13 15Z" fill="#00f000" stroke="#000" stroke-width="1.3" stroke-linejoin="round"/>
 <path d="M7 6.3 V14.4 H12.1Z" fill="#00a000"/>
 <path d="M3 13.5 H11 M4 12.2 H10" stroke="#8a9aa0" stroke-width="0.8" stroke-dasharray="1 1"/></svg></div>
<div class="a" style="left:85px;top:554px;width:121px;height:9px;overflow:hidden"><div class="t" style="left:3px;top:4px;color:#ff0000;letter-spacing:-0.42px">0BBP_VENDOR__0BECKS</div></div>
<div class="a" style="left:223px;top:554px;width:70px;height:9px;overflow:hidden"><div class="t" style="left:3px;top:4px;color:#ff0000;letter-spacing:-0.4px">0BBP_VEN...</div></div>
<div class="a" style="left:295px;top:554px;width:163px;height:9px;overflow:hidden"><div class="t" style="left:3px;top:4px;color:#ff0000;letter-spacing:0px">Object is missing in the target...</div></div>
<div class="a" style="left:513px;top:554px;width:52px;height:9px;overflow:hidden"><div class="t" style="left:3px;top:4px;color:#ff0000;letter-spacing:-0.15px">9IROG...</div></div>
<div class="t" style="left:88px;top:312px">Tech Name (Target)</div>
<div class="t" style="left:226px;top:312px">Tech Name...</div>
<div class="t" style="left:298px;top:312px">Status</div>
<div class="t" style="left:463px;top:312px">UID (T...</div>
<div class="t" style="left:516px;top:312px">UID (S...</div>
<div class="t" style="left:570px;top:312px">InfoOb...</div>
<div class="t" style="left:623px;top:312px">InfoOb...</div>
<div class="t" style="left:677px;top:312px">Repl. P...</div>
<div class="a" style="left:728px;top:353px;width:17px;height:210px;background:#deeaf8;border-top:1px solid #d4dde8"></div>
<svg style="left:732px;top:360px" width="9" height="5"><path d="M0 5 L4.5 0 L9 5Z" fill="#4e5f80"/></svg>
<svg style="left:732px;top:552px" width="9" height="5"><path d="M0 0 L4.5 5 L9 0Z" fill="#4e5f80"/></svg>
<div class="a" style="left:729px;top:371px;width:15px;height:166px;border:1px solid #8ea8cb;border-radius:2px;background:linear-gradient(90deg,#e6f0fa,#d3e0f0)"></div>
<svg style="left:733px;top:450px" width="7" height="8"><path d="M0 0.5 H7 M0 2.5 H7 M0 4.5 H7 M0 6.5 H7" stroke="#4e5a78" stroke-width="1"/></svg><div class="a" style="left:50px;top:574px;width:696px;height:121px;border:1px solid #8ea8cb;background:#fff;overflow:hidden">
</div>
<div class="a" style="left:51px;top:575px;width:694px;height:19px;background:linear-gradient(#edf3fa,#e0e9f5);box-shadow:inset 0 1px 0 #f7fafd"></div>
<div class="a" style="left:51px;top:594px;width:694px;height:1px;background:#8ea8cb"></div>
<div class="a" style="left:51px;top:595px;width:15px;height:25px;background:linear-gradient(90deg,#e9f0f9,#dce7f4)"></div>
<div class="a" style="left:51px;top:620px;width:15px;height:1px;background:#8ea8cb"></div>
<svg style="left:55px;top:605px" width="7" height="7" viewBox="0 0 7 7"><path d="M0 0 H7 V1 L4 3.5 V7 H3 V3.5 L0 1Z" fill="#4a5870"/></svg>
<div class="a" style="left:66px;top:575px;width:1px;height:46px;background:#8ea8cb"></div>
<div class="a" style="left:396px;top:575px;width:1px;height:19px;background:#8ea8cb"></div>
<div class="a" style="left:728px;top:575px;width:1px;height:19px;background:#8ea8cb"></div>
<div class="a" style="left:396px;top:595px;width:1px;height:22px;background:#d8d8d8"></div>
<div class="a" style="left:728px;top:595px;width:1px;height:25px;background:#e4e9f0"></div>
<div class="a" style="left:67px;top:617px;width:661px;height:1px;background:#555"></div>
<div class="a" style="left:67px;top:619px;width:661px;height:1px;background:#555"></div>
<div class="t" style="left:71px;top:579px">InfoProvider Source</div>
<div class="t" style="left:400px;top:579px">InfoProvider Target</div>
<div class="a" style="left:728px;top:620px;width:17px;height:74px;background:#deeaf8;border-top:1px solid #d4dde8"></div>
<svg style="left:732px;top:627px" width="9" height="5"><path d="M0 5 L4.5 0 L9 5Z" fill="#4e5f80"/></svg>
<svg style="left:732px;top:683px" width="9" height="5"><path d="M0 0 L4.5 5 L9 0Z" fill="#4e5f80"/></svg><div class="a" style="left:757px;top:307px;width:255px;height:415px;border:1px solid #8ea8cb;background:#fff;overflow:hidden">
</div>
<div class="a" style="left:758px;top:308px;width:253px;height:19px;background:linear-gradient(#edf3fa,#e0e9f5);box-shadow:inset 0 1px 0 #f7fafd"></div>
<div class="a" style="left:758px;top:327px;width:253px;height:1px;background:#8ea8cb"></div>
<div class="a" style="left:758px;top:328px;width:15px;height:25px;background:linear-gradient(90deg,#e9f0f9,#dce7f4)"></div>
<div class="a" style="left:758px;top:353px;width:15px;height:1px;background:#8ea8cb"></div>
<svg style="left:762px;top:338px" width="7" height="7" viewBox="0 0 7 7"><path d="M0 0 H7 V1 L4 3.5 V7 H3 V3.5 L0 1Z" fill="#4a5870"/></svg>
<div class="a" style="left:758px;top:354px;width:15px;height:19px;background:linear-gradient(90deg,#e9f0f9,#dce7f4)"></div>
<div class="a" style="left:758px;top:373px;width:15px;height:1px;background:#8ea8cb"></div>
<div class="a" style="left:758px;top:374px;width:15px;height:19px;background:linear-gradient(90deg,#e9f0f9,#dce7f4)"></div>
<div class="a" style="left:758px;top:393px;width:15px;height:1px;background:#8ea8cb"></div>
<div class="a" style="left:758px;top:394px;width:15px;height:19px;background:linear-gradient(90deg,#e9f0f9,#dce7f4)"></div>
<div class="a" style="left:758px;top:413px;width:15px;height:1px;background:#8ea8cb"></div>
<div class="a" style="left:758px;top:414px;width:15px;height:19px;background:linear-gradient(90deg,#e9f0f9,#dce7f4)"></div>
<div class="a" style="left:758px;top:433px;width:15px;height:1px;background:#8ea8cb"></div>
<div class="a" style="left:773px;top:308px;width:1px;height:126px;background:#8ea8cb"></div>
<div class="a" style="left:791px;top:308px;width:1px;height:19px;background:#8ea8cb"></div>
<div class="a" style="left:892px;top:308px;width:1px;height:19px;background:#8ea8cb"></div>
<div class="a" style="left:994px;top:308px;width:1px;height:19px;background:#8ea8cb"></div>
<div class="a" style="left:791px;top:328px;width:1px;height:22px;background:#d8d8d8"></div>
<div class="a" style="left:892px;top:328px;width:1px;height:22px;background:#d8d8d8"></div>
<div class="a" style="left:994px;top:328px;width:1px;height:25px;background:#e4e9f0"></div>
<div class="a" style="left:774px;top:350px;width:220px;height:1px;background:#555"></div>
<div class="a" style="left:774px;top:352px;width:220px;height:1px;background:#555"></div>
<div class="a" style="left:774px;top:373px;width:220px;height:1px;background:#d6e0ee"></div>
<div class="a" style="left:774px;top:393px;width:220px;height:1px;background:#d6e0ee"></div>
<div class="a" style="left:774px;top:413px;width:220px;height:1px;background:#d6e0ee"></div>
<div class="a" style="left:774px;top:433px;width:220px;height:1px;background:#d6e0ee"></div>
<div class="a" style="left:791px;top:353px;width:1px;height:80px;background:#d6e0ee"></div>
<div class="a" style="left:892px;top:353px;width:1px;height:80px;background:#d6e0ee"></div>
<div class="a" style="left:774px;top:354px;width:17px;height:19px;overflow:hidden"><svg style="left:0px;top:1px" width="16" height="16" viewBox="0 0 16 16">
 <rect x="5.5" y="2.5" width="9" height="9" fill="#fff" stroke="#707070" stroke-width="1"/>
 <path d="M8.5 2.5 V11.5 M11.5 2.5 V11.5 M5.5 5.5 H14.5 M5.5 8.5 H14.5" stroke="#707070" stroke-width="1"/>
 <path d="M1 15 L7 5.3 L13 15Z" fill="#00f000" stroke="#000" stroke-width="1.3" stroke-linejoin="round"/>
 <path d="M7 6.3 V14.4 H12.1Z" fill="#00a000"/>
 <path d="M3 13.5 H11 M4 12.2 H10" stroke="#8a9aa0" stroke-width="0.8" stroke-dasharray="1 1"/></svg></div>
<div class="a" style="left:792px;top:354px;width:99px;height:19px;overflow:hidden"><div class="t" style="left:3px;top:4px;color:#000;letter-spacing:-0.4px">0REQUID</div></div>
<div class="a" style="left:774px;top:374px;width:17px;height:19px;overflow:hidden"><svg style="left:0px;top:1px" width="16" height="16" viewBox="0 0 16 16">
 <path d="M1.5 11.5 L5.5 2.5 L9.5 9.5 L6.5 11.5Z" fill="#fff" stroke="#9a9a9a" stroke-width="1"/>
 <rect x="6.5" y="7.5" width="9" height="8" fill="#0fd00f" stroke="#000" stroke-width="1.2"/>
 <path d="M9.5 8 V15 M12.5 8 V15 M7 10.5 H15 M7 13 H15" stroke="#0a9a0a" stroke-width="0.7"/></svg></div>
<div class="a" style="left:792px;top:374px;width:99px;height:19px;overflow:hidden"><div class="t" style="left:3px;top:4px;color:#000;letter-spacing:-0.4px">0AMOUNT</div></div>
<div class="a" style="left:774px;top:394px;width:17px;height:19px;overflow:hidden"><svg style="left:0px;top:1px" width="16" height="16" viewBox="0 0 16 16">
 <rect x="5.5" y="2.5" width="9" height="9" fill="#fff" stroke="#707070" stroke-width="1"/>
 <path d="M8.5 2.5 V11.5 M11.5 2.5 V11.5 M5.5 5.5 H14.5 M5.5 8.5 H14.5" stroke="#707070" stroke-width="1"/>
 <path d="M1 15 L7 5.3 L13 15Z" fill="#f4f000" stroke="#000" stroke-width="1.3" stroke-linejoin="round"/>
 <path d="M4.5 10 H9.5 M3.5 13 H10.5 M7 7 V14.5" stroke="#1010e0" stroke-width="1.6"/></svg></div>
<div class="a" style="left:792px;top:394px;width:99px;height:19px;overflow:hidden"><div class="t" style="left:3px;top:4px;color:#000;letter-spacing:-0.4px">0CURRENCY</div></div>
<div class="a" style="left:774px;top:414px;width:17px;height:19px;overflow:hidden"><svg style="left:0px;top:1px" width="16" height="16" viewBox="0 0 16 16">
 <rect x="5.5" y="2.5" width="9" height="9" fill="#fff" stroke="#707070" stroke-width="1"/>
 <path d="M8.5 2.5 V11.5 M11.5 2.5 V11.5 M5.5 5.5 H14.5 M5.5 8.5 H14.5" stroke="#707070" stroke-width="1"/>
 <path d="M1 15 L7 5.3 L13 15Z" fill="#00f000" stroke="#000" stroke-width="1.3" stroke-linejoin="round"/>
 <path d="M7 6.3 V14.4 H12.1Z" fill="#00a000"/>
 <path d="M3 13.5 H11 M4 12.2 H10" stroke="#8a9aa0" stroke-width="0.8" stroke-dasharray="1 1"/></svg></div>
<div class="a" style="left:792px;top:414px;width:99px;height:19px;overflow:hidden"><div class="t" style="left:3px;top:4px;color:#000;letter-spacing:-0.4px">0ADDR_NUMBR</div></div>
<div class="t" style="left:795px;top:312px">Object</div>
<div class="t" style="left:896px;top:312px">UID</div>
<div class="a" style="left:994px;top:353px;width:17px;height:368px;background:#deeaf8;border-top:1px solid #d4dde8"></div>
<svg style="left:998px;top:360px" width="9" height="5"><path d="M0 5 L4.5 0 L9 5Z" fill="#4e5f80"/></svg>
<svg style="left:998px;top:710px" width="9" height="5"><path d="M0 0 L4.5 5 L9 0Z" fill="#4e5f80"/></svg><!-- right panel top -->
<div class="a" style="left:757px;top:279px;width:60px;height:23px;border:1px solid #9db2cf;border-radius:3px;background:linear-gradient(#e8f0f9,#d3e0f0)"></div>
<div class="t" style="left:767px;top:285px;color:#000">Refresh</div>
<div class="t" style="left:822px;top:285px;color:#000;font-weight:bold;letter-spacing:0.22px">InfoProvider: CUBE YSPC0101</div>
<div class="a" style="left:757px;top:705px;width:160px;height:17px;border:1px solid #8ea8cb;border-radius:3px 3px 0 0;background:linear-gradient(#e6eef8,#d3e0f0)"></div>
<div class="t" style="left:767px;top:708px;color:#000">Check Date and Time Format</div>

<!-- bottom buttons -->
<div class="a" style="left:50px;top:705px;width:199px;height:17px;border:1px solid #9db2cf;border-radius:3px;background:linear-gradient(#e8f0f9,#d3e0f0)"></div>
<div class="t" style="left:60px;top:708px;color:#000">Propose replacements of tech names</div>
<div class="a" style="left:257px;top:703px;width:159px;height:20px;border:3px solid #d8a23e;background:linear-gradient(#e8f0f9,#d3e0f0)"></div>
<div class="t" style="left:269px;top:708px;color:#000">Execute consistency checks</div>
<div class="a" style="left:424px;top:705px;width:116px;height:17px;border:1px solid #d8e2ef;border-radius:3px;background:#f1f5fa"></div>
<div class="t" style="left:434px;top:708px;color:#a8b2c0;letter-spacing:0.08px">Apply target values</div>
<div class="a" style="left:550px;top:705px;width:88px;height:17px;border:1px solid #d8e2ef;border-radius:3px;background:#f1f5fa"></div>
<div class="t" style="left:560px;top:708px;color:#a8b2c0;letter-spacing:0.15px">Start creation</div>

<!-- status bar -->
<div class="a" style="left:8px;top:768px;width:1050px;height:31px;border:1px solid #6f6f6f;background:#cfdcee"></div>
<div class="t" style="left:12px;top:777px">Active Project</div>
<div class="a" style="left:85px;top:772px;width:100px;height:20px;border:1px solid #8ea8c8;background:#fff"></div>
<div class="a" style="left:168px;top:773px;width:16px;height:18px;border-left:1px solid #8ea8c8;background:linear-gradient(#eef3fa,#d9e4f2)"></div>
<svg style="left:172px;top:780px" width="8" height="4"><path d="M0 0 H7 L3.5 3.5Z" fill="#4e5f80"/></svg>
<div class="t" style="left:88px;top:777px;letter-spacing:1px">P1</div>
<svg style="left:855px;top:774px" width="17" height="16" viewBox="0 0 17 16">
 <defs><linearGradient id="dbg" x1="0" x2="1"><stop offset="0" stop-color="#b8bcc2"/><stop offset="0.5" stop-color="#f2f3f5"/><stop offset="1" stop-color="#a8adb4"/></linearGradient></defs>
 <path d="M0.5 2.5 Q0.5 0.5,6.5 0.5 Q12.5 0.5,12.5 2.5 V12.5 Q12.5 14.5,6.5 14.5 Q0.5 14.5,0.5 12.5Z" fill="url(#dbg)" stroke="#9aa0a8" stroke-width="1"/>
 <path d="M0.5 5.5 Q6.5 7.5,12.5 5.5 M0.5 9 Q6.5 11,12.5 9" stroke="#9aa0a8" stroke-width="0.8" fill="none"/>
 <rect x="6.5" y="5.5" width="9" height="9" fill="#dff0fb" stroke="#1f8ad2" stroke-width="1.3"/>
 <rect x="8.5" y="6" width="5" height="3" fill="#fff" stroke="#7ab" stroke-width="0.6"/>
 <rect x="9.5" y="11" width="3" height="3.3" fill="#2a7ab8"/>
</svg>
<div class="t" style="left:873px;top:777px">SQLite</div>
<svg style="left:913px;top:773px" width="16" height="17" viewBox="0 0 16 17">
 <path d="M1.5 15.5 Q1.5 11,8 10.5 Q14.5 11,14.5 15.5Z" fill="#e6e8f0" stroke="#2a2e80" stroke-width="1"/>
 <ellipse cx="8" cy="6" rx="3.2" ry="4" fill="#f8dcc0" stroke="#6a4a20" stroke-width="0.8"/>
 <path d="M4.5 5.5 Q4 1,8 1.2 Q12 1,11.6 5 Q10 3,7 3.5 Q5.5 4,4.5 5.5Z" fill="#a86a1a"/>
</svg>
<div class="t" style="left:931px;top:777px">Admin (Full administrator)</div>
</body></html>
